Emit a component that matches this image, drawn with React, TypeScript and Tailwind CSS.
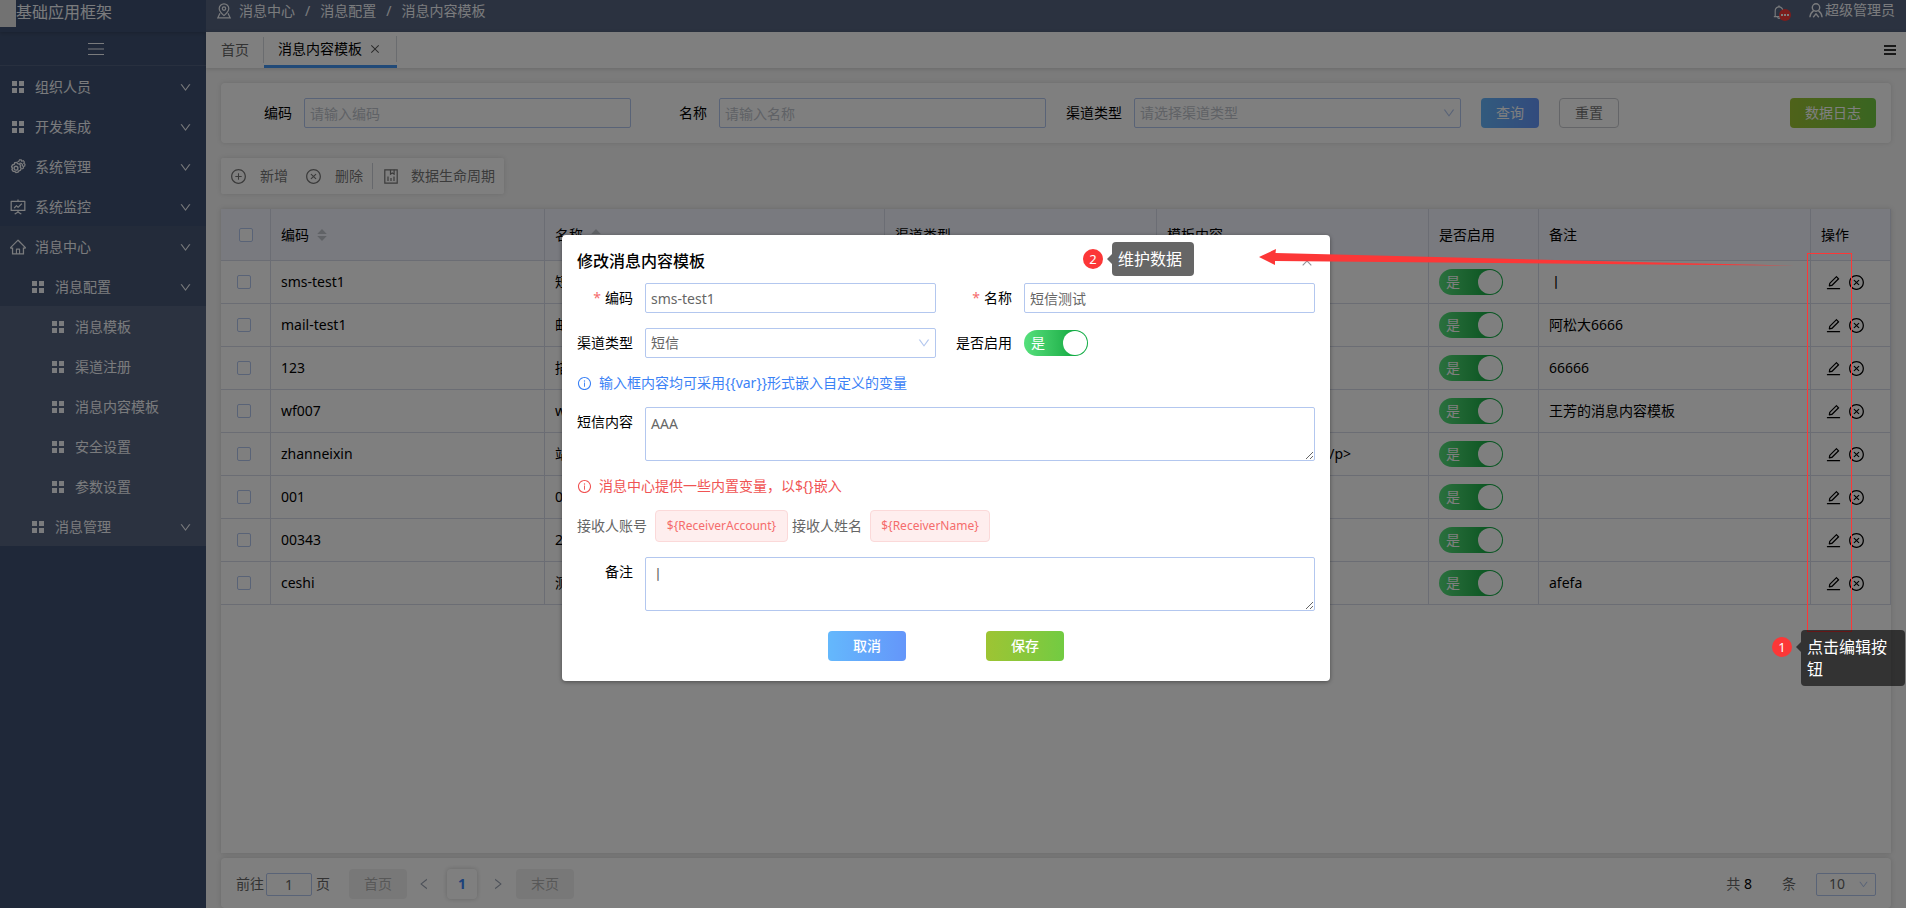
import React from "react";
import {
  AiOutlineBell,
  AiOutlineCloseCircle,
  AiOutlineClose,
  AiOutlineDown,
  AiOutlineEdit,
  AiOutlineFundProjectionScreen,
  AiOutlineHome,
  AiOutlineInfoCircle,
  AiOutlineLeft,
  AiOutlinePlusCircle,
  AiOutlineRight,
} from "react-icons/ai";

function GridIcon() {
  return (
    <svg viewBox="0 0 12 12" className="h-3 w-3" fill="currentColor" aria-hidden="true">
      <path d="M0 0h5v5H0zM7 0h5v5H7zM0 7h5v5H0zM7 7h5v5H7z" />
    </svg>
  );
}

function GearsIcon() {
  return (
    <svg viewBox="0 0 18 18" className="h-[18px] w-[18px]" fill="none" stroke="currentColor" strokeWidth="1.2" aria-hidden="true">
      <path d="M5.800 4.600l2-.2.900 1.300 1.600.3 1.300 1.500-.3 1.600.9 1.400-.8 1.800-1.500.5-.9 1.400-2 .3-1.200-1.100-1.600-.1-1.200-1.600.4-1.500-.8-1.500.9-1.800 1.600-.4z" strokeWidth="1.4" />
      <circle cx="7" cy="10.200" r="1.900" strokeWidth="1.400" />
      <path d="M8.600 3.600l1.300-.4.600-1.400 1.700.1.600 1.300 1.500-.5 1.100 1.300-.6 1.300 1.200.9-.3 1.800-1.400.4.200 1.600-1.400.9" />
      <path d="M10.600 5.100a2.600 2.600 0 0 1 2.900 3.200" />
    </svg>
  );
}

function MenuLines() {
  return (
    <svg viewBox="0 0 16 14" className="h-[14px] w-4" stroke="currentColor" strokeWidth="1.2" aria-hidden="true">
      <path d="M0 1.500h16M0 7h16M0 12.500h16" />
    </svg>
  );
}

function PlaceIcon() {
  return (
    <svg viewBox="0 0 16 16" className="h-4 w-4" fill="none" stroke="currentColor" strokeWidth="1.2" aria-hidden="true">
      <path d="M8 12.600C5 10.200 3.200 8.300 3.200 5.600a4.800 4.800 0 0 1 9.600 0c0 2.700-1.800 4.600-4.800 7z" />
      <circle cx="8" cy="5.600" r="1.700" />
      <path d="M4 10.200L1.800 14.900h12.400L12 10.200" />
    </svg>
  );
}

function UserIcon() {
  return (
    <svg viewBox="0 0 14 15" className="h-[15px] w-[14px]" fill="none" stroke="currentColor" strokeWidth="1.4" aria-hidden="true">
      <circle cx="7" cy="4.500" r="3.700" />
      <path d="M4.600 7.600C2.700 9 1.200 11 .9 14.200M9.400 7.600c1.900 1.400 3.400 3.400 3.700 6.600M4.200 14.200L7 10.800l2.800 3.400" />
    </svg>
  );
}

function DataIcon() {
  return (
    <svg viewBox="0 0 14 15" className="h-[15px] w-[14px]" fill="none" stroke="currentColor" strokeWidth="1.2" aria-hidden="true">
      <path d="M.8.8h12.400v13.400H.8z" />
      <path d="M6.500.8v4.400l1.800-1.300 1.800 1.300V.8M4 12V7.500M7 12V9M10 12V7.500" />
    </svg>
  );
}

type Item = { text: string; icon: "grid" | "gears" | "screen" | "home"; level: 0 | 1 | 2; open?: boolean };

const topItems: Item[] = [
  { text: "组织人员", icon: "grid", level: 0, open: true },
  { text: "开发集成", icon: "grid", level: 0, open: true },
  { text: "系统管理", icon: "gears", level: 0, open: true },
  { text: "系统监控", icon: "screen", level: 0, open: true },
];
const centerItems: Item[] = [
  { text: "消息中心", icon: "home", level: 0, open: true },
  { text: "消息配置", icon: "grid", level: 1, open: true },
];
const nestedItems: Item[] = [
  { text: "消息模板", icon: "grid", level: 2 },
  { text: "渠道注册", icon: "grid", level: 2 },
  { text: "消息内容模板", icon: "grid", level: 2 },
  { text: "安全设置", icon: "grid", level: 2 },
  { text: "参数设置", icon: "grid", level: 2 },
  { text: "消息管理", icon: "grid", level: 1, open: true },
];

const indent = { 0: "pl-[9px]", 1: "pl-[29px]", 2: "pl-[49px]" };

function MenuItem({ item }: { item: Item }) {
  return (
    <li>
      <a href="#" className={`flex h-10 items-center pr-[14px] pt-0.5 ${indent[item.level]}`}>
        <span className="flex w-[18px] justify-center">
          {item.icon === "grid" && <GridIcon />}
          {item.icon === "gears" && <GearsIcon />}
          {item.icon === "screen" && <AiOutlineFundProjectionScreen size={18} />}
          {item.icon === "home" && <AiOutlineHome size={18} />}
        </span>
        <span className="ml-2 flex-1">{item.text}</span>
        {item.open && <AiOutlineDown size={13} />}
      </a>
    </li>
  );
}

function Sidebar() {
  return (
    <aside className="flex w-[206px] shrink-0 flex-col bg-[#3f5172] text-[#f4f6fa]">
      <div className="flex h-8 items-start shadow-[0_1px_4px_rgba(0,0,0,0.2)]">
        <span className="h-[27px] w-4 bg-[#e4e4e4]" />
        <span className="text-base leading-6">基础应用框架</span>
      </div>
      <button type="button" aria-label="折叠菜单" className="flex h-[34px] items-center justify-center border-b border-[#51617f] pr-[14px]">
        <MenuLines />
      </button>
      <nav>
        <ul>{topItems.map((i) => <MenuItem key={i.text} item={i} />)}</ul>
        <ul className="bg-[#475774]">{centerItems.map((i) => <MenuItem key={i.text} item={i} />)}</ul>
        <ul className="bg-[#566480]">{nestedItems.map((i) => <MenuItem key={i.text} item={i} />)}</ul>
      </nav>
    </aside>
  );
}

function Header() {
  return (
    <header className="flex h-8 items-start justify-between bg-[#566480] pl-[10px] pr-[11px] text-[#f4f6fa]">
      <div className="flex items-center gap-[10px] leading-[22px]">
        <span className="-mr-[3px]"><PlaceIcon /></span>
        <a href="#">消息中心</a>
        <span>/</span>
        <a href="#">消息配置</a>
        <span>/</span>
        <span>消息内容模板</span>
      </div>
      <div className="flex items-center leading-5">
        <button type="button" aria-label="通知" className="relative mr-[22px] pt-1">
          <AiOutlineBell size={16} />
          <span className="absolute left-2 top-[9px] flex h-3 w-3 items-center justify-center gap-px rounded-full bg-[#f83a3a]">
            <i className="h-0.5 w-0.5 bg-white" />
            <i className="h-0.5 w-0.5 bg-white" />
            <i className="h-0.5 w-0.5 bg-white" />
          </span>
        </button>
        <UserIcon />
        <span className="ml-0.5">超级管理员</span>
      </div>
    </header>
  );
}

function Tabs() {
  return (
    <div className="flex h-9 items-stretch bg-white shadow-[0_1px_4px_rgba(0,0,0,0.15)]">
      <a href="#" className="my-[5px] flex w-[58px] items-center border-r border-[#d4d8de] pl-[15px] text-[#666]">首页</a>
      <div className="flex items-center border-b-[3px] border-[#4294f0]">
        <div className="flex h-[26px] items-center border-r border-[#d4d8de] pl-[14px] pr-[15px]">
          <a href="#" className="text-black">消息内容模板</a>
          <button type="button" aria-label="关闭标签" className="ml-[7px] text-[#555]"><AiOutlineClose size={12} /></button>
        </div>
      </div>
      <button type="button" aria-label="标签菜单" className="ml-auto mr-[10px] text-[#333]">
        <svg viewBox="0 0 12 10" className="h-[10px] w-3" fill="currentColor" aria-hidden="true">
          <path d="M0 0h12v2H0zM0 4h12v2H0zM0 8h12v2H0z" />
        </svg>
      </button>
    </div>
  );
}

const fieldBox = "h-[30px] w-full min-w-0 rounded-xs border border-[#b3c7ef] bg-white px-[5px] text-[#666] outline-none placeholder:text-[#c0c4cc]";

function Search() {
  return (
    <form className="grid grid-cols-4 gap-x-5 rounded bg-white p-[15px] shadow-[0_0_5px_rgba(0,0,0,0.12)]">
      <div className="flex items-center">
        <label htmlFor="q-code" className="w-[68px] shrink-0 pr-3 text-right">编码</label>
        <input id="q-code" className={fieldBox} placeholder="请输入编码" />
      </div>
      <div className="flex items-center">
        <label htmlFor="q-name" className="w-[68px] shrink-0 pr-3 text-right">名称</label>
        <input id="q-name" className={fieldBox} placeholder="请输入名称" />
      </div>
      <div className="flex items-center">
        <label htmlFor="q-type" className="w-[68px] shrink-0 pr-3 text-right">渠道类型</label>
        <div className="relative flex-1">
          <select id="q-type" defaultValue="" className="h-[30px] w-full appearance-none rounded-xs border border-[#b3c7ef] bg-white px-[5px] text-[#c0c4cc]">
            <option value="">请选择渠道类型</option>
          </select>
          <AiOutlineDown size={14} className="pointer-events-none absolute right-[5px] top-2 text-[#b3c7ef]" />
        </div>
      </div>
      <div className="flex items-center gap-5">
        <button type="button" className="h-[30px] w-[58px] rounded bg-linear-to-r from-[#64b5fa] to-[#6496fa] text-white">查询</button>
        <button type="button" className="h-[30px] w-[60px] rounded border border-[#c9cbd0] text-[#777]">重置</button>
        <button type="button" className="ml-auto h-[30px] w-[86px] rounded bg-linear-to-r from-[#9dc433] to-[#72cb42] text-white">数据日志</button>
      </div>
    </form>
  );
}

function Toolbar() {
  return (
    <div className="flex h-9 items-center self-start rounded-xs bg-white px-[9px] text-[#777] shadow-[0_0_5px_rgba(0,0,0,0.12)]">
      <button type="button" className="flex items-center gap-[13px]"><AiOutlinePlusCircle size={17} />新增</button>
      <button type="button" className="ml-[17px] flex items-center gap-[13px]"><AiOutlineCloseCircle size={17} />删除</button>
      <span className="mx-[9px] h-[26px] w-px bg-[#ccd0d8]" />
      <button type="button" className="ml-0.5 flex items-center gap-[13px]"><DataIcon />数据生命周期</button>
    </div>
  );
}

function Switch({ label }: { label: string }) {
  return (
    <label className="relative block h-[26px] w-16 rounded-full bg-linear-to-r from-[#55e07c] to-[#10ab43] to-80%">
      <input type="checkbox" role="switch" aria-label={label} defaultChecked className="absolute inset-0 appearance-none" />
      <span className="block pl-[7px] leading-[26px] text-white">是</span>
      <span className="absolute right-px top-px h-6 w-6 rounded-full bg-white" />
    </label>
  );
}

function SortArrows() {
  return (
    <svg viewBox="0 0 10 14" className="ml-2 inline-block h-[14px] w-[10px] align-[-2px]" fill="#c0c4cc" aria-hidden="true">
      <path d="M5 1l4.800 5H.2zM5 13l4.800-5H.2z" />
    </svg>
  );
}

const rows = [
  { code: "sms-test1", name: "短信测试", body: "", note: "丨" },
  { code: "mail-test1", name: "邮件", body: "", note: "阿松大6666" },
  { code: "123", name: "描述", body: "", note: "66666" },
  { code: "wf007", name: "wf", body: "", note: "王芳的消息内容模板" },
  { code: "zhanneixin", name: "站内信", body: "<p>站内信 消息模板内容</p>", note: "" },
  { code: "001", name: "001", body: "", note: "" },
  { code: "00343", name: "222", body: "", note: "" },
  { code: "ceshi", name: "测试", body: "", note: "afefa" },
];

const check = "block h-[14px] w-[14px] appearance-none rounded-xs border border-[#b3c7ef] bg-white";

function DataTable() {
  return (
    <div className="min-h-0 flex-1 bg-white shadow-[0_0_5px_rgba(0,0,0,0.15)]">
      <table className="w-full table-fixed border-separate border-spacing-0 text-left text-black [&_td]:h-[43px] [&_td]:border-b [&_td]:border-r [&_td]:border-[#d6dae8] [&_td]:px-[10px] [&_th]:h-[52px] [&_th]:border-b [&_th]:border-r [&_th]:border-[#d6dae8] [&_th]:bg-[#f3f5ff] [&_th]:px-[10px] [&_th]:font-normal">
        <colgroup>
          <col className="w-[50px]" />
          <col className="w-[274px]" />
          <col />
          <col className="w-[272px]" />
          <col className="w-[272px]" />
          <col className="w-[110px]" />
          <col className="w-[272px]" />
          <col className="w-20" />
        </colgroup>
        <thead>
          <tr>
            <th><input type="checkbox" aria-label="全选" className={`ml-2 ${check}`} /></th>
            <th>编码<SortArrows /></th>
            <th>名称<SortArrows /></th>
            <th>渠道类型</th>
            <th>模板内容</th>
            <th>是否启用</th>
            <th>备注</th>
            <th>操作</th>
          </tr>
        </thead>
        <tbody>
          {rows.map((r) => (
            <tr key={r.code}>
              <td><input type="checkbox" aria-label={`选择 ${r.code}`} className={`ml-[6px] ${check}`} /></td>
              <td>{r.code}</td>
              <td>{r.name}</td>
              <td />
              <td className="whitespace-nowrap">{r.body}</td>
              <td><Switch label={`${r.code} 是否启用`} /></td>
              <td>{r.note}</td>
              <td>
                <div className="flex items-center gap-[6px] pl-1">
                  <button type="button" aria-label="编辑"><AiOutlineEdit size={17} /></button>
                  <button type="button" aria-label="删除"><AiOutlineCloseCircle size={17} /></button>
                </div>
              </td>
            </tr>
          ))}
        </tbody>
      </table>
    </div>
  );
}

function Pagination() {
  return (
    <div className="mt-[5px] flex h-[50px] shrink-0 items-center rounded bg-white px-[15px] pt-0.5 text-[#666] shadow-[0_0_5px_rgba(0,0,0,0.15)]">
      <label htmlFor="page">前往</label>
      <input id="page" defaultValue="1" className="mx-0.5 h-[23px] w-[46px] rounded-xs border border-[#b3c7ef] text-center" />
      <span className="ml-0.5">页</span>
      <button type="button" className="ml-[19px] h-[30px] w-[58px] rounded bg-[#f1f1f1] text-[#b0b0b0]">首页</button>
      <button type="button" aria-label="上一页" className="ml-[10px] flex w-[30px] items-center text-[#99a2b2]"><AiOutlineLeft size={14} /></button>
      <button type="button" className="h-[30px] w-[30px] rounded font-bold text-[#3b82f6] shadow-[0_0_5px_rgba(0,0,0,0.2)]">1</button>
      <button type="button" aria-label="下一页" className="flex w-[39px] items-center pl-[14px] text-[#99a2b2]"><AiOutlineRight size={14} /></button>
      <button type="button" className="h-[30px] w-[58px] rounded bg-[#f1f1f1] text-[#b0b0b0]">末页</button>
      <span className="ml-auto">共 <span className="text-black">8</span></span>
      <label htmlFor="size" className="ml-[30px]">条</label>
      <div className="relative ml-5">
        <select id="size" className="h-[23px] w-[60px] appearance-none rounded-xs border border-[#b3c7ef] bg-white pl-3">
          <option>10</option>
        </select>
        <AiOutlineDown size={11} className="pointer-events-none absolute right-[7px] top-[6px] text-[#b3c7ef]" />
      </div>
    </div>
  );
}

const labelBox = "w-[68px] shrink-0 pr-3 text-right text-black";

function EditDialog() {
  return (
    <section role="dialog" aria-label="修改消息内容模板" className="w-[768px] rounded bg-white px-[15px] pb-5 pt-[14px] text-[#666] shadow-[0_1px_4px_rgba(0,0,0,0.4)]">
      <div className="flex items-center justify-between">
        <h2 className="text-base font-medium leading-6 text-black">修改消息内容模板</h2>
        <button type="button" aria-label="关闭" className="mr-[1px] text-[#909399]"><AiOutlineClose size={14} /></button>
      </div>
      <form>
        <div className="mt-[10px] grid grid-cols-2 gap-x-5 gap-y-[15px]">
          <div className="flex items-center">
            <label htmlFor="code" className={labelBox}><span className="mr-1 text-[#f56c6c]">*</span>编码</label>
            <input id="code" defaultValue="sms-test1" className={fieldBox} />
          </div>
          <div className="flex items-center">
            <label htmlFor="name" className={labelBox}><span className="mr-1 text-[#f56c6c]">*</span>名称</label>
            <input id="name" defaultValue="短信测试" className={fieldBox} />
          </div>
          <div className="flex items-center">
            <label htmlFor="type" className={labelBox}>渠道类型</label>
            <div className="relative flex-1">
              <select id="type" className="h-[30px] w-full appearance-none rounded-xs border border-[#b3c7ef] bg-white px-[5px]">
                <option>短信</option>
              </select>
              <AiOutlineDown size={14} className="pointer-events-none absolute right-[5px] top-2 text-[#b3c7ef]" />
            </div>
          </div>
          <div className="flex items-center">
            <span className={labelBox}>是否启用</span>
            <Switch label="是否启用" />
          </div>
        </div>
        <p className="mt-[14px] flex items-center gap-[7px] leading-[22px] text-[#3b82f6]">
          <AiOutlineInfoCircle size={15} />
          {"输入框内容均可采用{{var}}形式嵌入自定义的变量"}
        </p>
        <div className="mt-[13px] flex items-start">
          <label htmlFor="content" className={`leading-[30px] ${labelBox}`}>短信内容</label>
          <textarea id="content" defaultValue="AAA" className="h-[54px] flex-1 rounded-xs border border-[#b3c7ef] px-[5px] py-[5px] leading-[22px]" />
        </div>
        <p className="mt-[14px] flex items-center gap-[7px] leading-[22px] text-[#f05454]">
          <AiOutlineInfoCircle size={15} />
          {"消息中心提供一些内置变量，以${}嵌入"}
        </p>
        <div className="mt-[13px] flex items-center">
          <span>接收人账号</span>
          <span className="ml-2 flex h-8 w-[133px] items-center justify-center rounded border border-[#fbd9d9] bg-[#feeeee] text-xs text-[#f56c6c]">{"${ReceiverAccount}"}</span>
          <span className="ml-1">接收人姓名</span>
          <span className="ml-2 flex h-8 w-[120px] items-center justify-center rounded border border-[#fbd9d9] bg-[#feeeee] text-xs text-[#f56c6c]">{"${ReceiverName}"}</span>
        </div>
        <div className="mt-[15px] flex items-start">
          <label htmlFor="note" className={`leading-[30px] ${labelBox}`}>备注</label>
          <textarea id="note" defaultValue="丨" className="h-[54px] flex-1 rounded-xs border border-[#b3c7ef] px-[5px] py-[5px] leading-[22px]" />
        </div>
        <div className="mt-5 flex justify-center gap-20">
          <button type="button" className="h-[30px] w-[78px] rounded bg-linear-to-r from-[#64b8fc] to-[#6496fa] font-medium text-white">取消</button>
          <button type="button" className="h-[30px] w-[78px] rounded bg-linear-to-r from-[#9dc433] to-[#72cb42] font-medium text-white">保存</button>
        </div>
      </form>
    </section>
  );
}

function Callout({ number, text, width }: { number: number; text: string; width: string }) {
  return (
    <div className="flex items-start text-base leading-[22px] text-white">
      <span className="mt-[7px] flex h-5 w-5 items-center justify-center rounded-full bg-[#fc3737] text-[13px]">{number}</span>
      <svg viewBox="0 0 5 10" className="ml-1 mt-3 h-[10px] w-[5px]" aria-hidden="true">
        <path d="M5 0v10L0 5z" fill="rgba(0,0,0,0.6)" />
      </svg>
      <span className={`rounded-sm bg-black/60 py-[6px] pl-[6px] pr-3 ${width}`}>{text}</span>
    </div>
  );
}

function Annotations() {
  return (
    <div className="pointer-events-none absolute inset-0">
      <svg className="absolute right-[110px] top-[248px] h-5 w-[538px]" viewBox="0 0 538 20" aria-hidden="true">
        <path d="M1 9L18 1L17.500 5L420 15L537 17.500L420 16.800L17 13V17Z" fill="#fc3737" />
      </svg>
      <div className="absolute right-[54px] top-[253px] h-[379px] w-[45px] border border-[#fc3737]" />
      <div className="absolute left-[1083px] top-[242px]"><Callout number={2} text="维护数据" width="w-[82px]" /></div>
      <div className="absolute right-px top-[630px]"><Callout number={1} text="点击编辑按钮" width="w-[104px]" /></div>
    </div>
  );
}

export default function App() {
  return (
    <div className="relative flex h-screen min-h-[680px] overflow-hidden bg-[#f6f6f6] font-['Noto_Sans','Noto_Sans_CJK_SC',sans-serif] text-sm text-black">
      <Sidebar />
      <div className="flex min-w-0 flex-1 flex-col">
        <Header />
        <Tabs />
        <main className="flex min-h-0 flex-1 flex-col px-[15px] pt-[15px]">
          <Search />
          <div className="flex flex-col py-[15px]"><Toolbar /></div>
          <DataTable />
          <Pagination />
        </main>
      </div>
      <div className="absolute inset-0 flex items-center justify-center bg-black/50 pr-[14px] pt-2">
        <EditDialog />
      </div>
      <Annotations />
    </div>
  );
}
